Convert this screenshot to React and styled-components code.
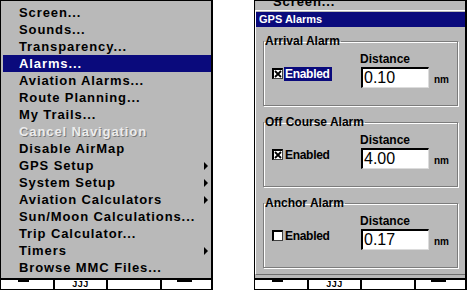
import styled, { createGlobalStyle } from "styled-components";

const GlobalStyle = createGlobalStyle`
  body {
    margin: 0;
    background: #fff;
  }
`;

const GRAY = "#b9b9b9";
const NAVY = "#0a0a7c";

const Screen = styled.div`
  display: flex;
  gap: 41px;
  width: 467px;
  height: 290px;
  font-family: "Liberation Sans", Arial, sans-serif;
`;

const Panel = styled.div`
  box-sizing: border-box;
  width: 213px;
  height: 290px;
  display: flex;
  flex-direction: column;
  background: ${GRAY};
  border-top: 1px solid #000;
  border-left: 1px solid #000;
  border-right: 2px solid #000;
`;

const Menu = styled.div`
  flex: 1;
  padding: 3px 0 2px;
`;

const Item = styled.div`
  display: flex;
  align-items: center;
  justify-content: space-between;
  height: 17px;
  margin-left: 2px;
  padding: 0 3px 0 16px;
  font-size: 13px;
  font-weight: bold;
  letter-spacing: 0.9px;
  line-height: 17px;
  white-space: nowrap;
  color: ${(p) => (p.$disabled ? "#ececec" : p.$selected ? "#fff" : "#000")};
  background: ${(p) => (p.$selected ? NAVY : "transparent")};
  text-shadow: ${(p) => (p.$disabled ? "1px 1px 0 #7a7a7a" : "none")};
`;

const Arrow = styled.span`
  width: 0;
  height: 0;
  border-left: 4px solid #000;
  border-top: 4px solid transparent;
  border-bottom: 4px solid transparent;
`;

const SoftBar = styled.div`
  box-sizing: border-box;
  display: flex;
  height: 12px;
  background: #fff;
  border-top: 2px solid #000;
  border-bottom: 1px solid #000;
`;

const SoftKey = styled.div`
  display: flex;
  justify-content: center;
  align-items: flex-start;
  overflow: hidden;
  width: ${(p) => (p.$w ? `${p.$w}px` : "auto")};
  flex: ${(p) => (p.$w ? "none" : "1")};
  border-right: ${(p) => (p.$last ? "none" : "2px solid #000")};
  font-size: 9px;
  font-weight: bold;
  line-height: 8px;
  letter-spacing: 0.5px;
`;

const Stub = styled.span`
  width: ${(p) => p.$w}px;
  height: 2px;
  margin-left: ${(p) => p.$shift || 0}px;
  background: #000;
`;

const Peek = styled.div`
  height: 9px;
  overflow: hidden;
  & > ${Item} {
    margin-top: -8px;
  }
`;

const Dialog = styled.div`
  flex: 1;
  display: flex;
  flex-direction: column;
  margin-bottom: 3px;
  border-top: 1px solid #fff;
  border-left: 1px solid #fff;
  border-bottom: 1px solid #6e6e6e;
`;

const TitleBar = styled.div`
  height: 15px;
  margin-top: 1px;
  padding-left: 3px;
  background: ${NAVY};
  color: #fff;
  font-size: 11px;
  font-weight: bold;
  line-height: 15px;
`;

const Body = styled.div`
  display: flex;
  flex-direction: column;
  gap: 9px;
  padding: 7px 7px 0;
`;

const Group = styled.fieldset`
  margin: 0;
  padding: 0;
  min-width: 0;
  border: 1px solid #7c7c7c;
  box-shadow: inset 1px 1px 0 #fff, 1px 1px 0 #fff;
`;

const Legend = styled.legend`
  margin-left: 0;
  padding: 0 1px;
  font-size: 12px;
  font-weight: bold;
  line-height: 14px;
  color: #000;
`;

const GroupBody = styled.div`
  display: grid;
  grid-template-columns: 88px auto;
  grid-template-rows: 15px 21px;
  padding: 4px 0 17px 8px;
`;

const Field = styled.div`
  grid-column: 1;
  grid-row: 2;
  display: flex;
  align-items: flex-start;
  padding-top: 1px;
`;

const Box = styled.span`
  box-sizing: border-box;
  display: flex;
  width: 11px;
  height: 11px;
  background: #fff;
  border-top: 2px solid #000;
  border-left: 2px solid #000;
  border-right: 1px solid #404040;
  border-bottom: 1px solid #404040;
`;

const CheckText = styled.span`
  margin-left: 1px;
  padding: 0 2px 0 1px;
  height: 14px;
  margin-top: -1px;
  font-size: 12px;
  font-weight: bold;
  letter-spacing: -0.3px;
  line-height: 14px;
  color: ${(p) => (p.$focus ? "#fff" : "#000")};
  background: ${(p) => (p.$focus ? NAVY : "transparent")};
`;

const Label = styled.div`
  grid-column: 2;
  grid-row: 1;
  font-size: 12px;
  font-weight: bold;
  line-height: 14px;
`;

const InputRow = styled.div`
  grid-column: 2;
  grid-row: 2;
  display: flex;
  align-items: flex-end;
`;

const Input = styled.div`
  box-sizing: border-box;
  width: 68px;
  height: 21px;
  margin-left: 1px;
  padding-left: 1px;
  background: #fff;
  border-top: 2px solid #000;
  border-left: 2px solid #000;
  border-right: 1px solid #dcdcdc;
  border-bottom: 1px solid #dcdcdc;
  font-size: 16px;
  line-height: 18px;
  color: #000;
`;

const Unit = styled.span`
  margin-left: 5px;
  padding-bottom: 3px;
  font-size: 10px;
  font-weight: bold;
  line-height: 10px;
`;

const menu = [
  { label: "Screen..." },
  { label: "Sounds..." },
  { label: "Transparency..." },
  { label: "Alarms...", selected: true },
  { label: "Aviation Alarms..." },
  { label: "Route Planning..." },
  { label: "My Trails..." },
  { label: "Cancel Navigation", disabled: true },
  { label: "Disable AirMap" },
  { label: "GPS Setup", arrow: true },
  { label: "System Setup", arrow: true },
  { label: "Aviation Calculators", arrow: true },
  { label: "Sun/Moon Calculations..." },
  { label: "Trip Calculator..." },
  { label: "Timers", arrow: true },
  { label: "Browse MMC Files..." },
];

const alarms = [
  { name: "Arrival Alarm", value: "0.10", checked: true, focus: true },
  { name: "Off Course Alarm", value: "4.00", checked: true },
  { name: "Anchor Alarm", value: "0.17", checked: false },
];

const Check = ({ checked }) => (
  <Box>
    {checked && (
      <svg width="8" height="8" viewBox="0 0 8 8">
        <path d="M1 1 L7 7 M7 1 L1 7" stroke="#000" strokeWidth="1.8" />
      </svg>
    )}
  </Box>
);

const Keys = () => (
  <SoftBar>
    <SoftKey $w={52}>
      <Stub $w={11} $shift={-8} />
    </SoftKey>
    <SoftKey $w={51}>JJJ</SoftKey>
    <SoftKey $w={52} />
    <SoftKey $last>
      <Stub $w={15} $shift={-4} />
    </SoftKey>
  </SoftBar>
);

export default function App() {
  return (
    <>
      <GlobalStyle />
      <Screen>
        <Panel>
          <Menu>
            {menu.map((m) => (
              <Item key={m.label} $selected={m.selected} $disabled={m.disabled}>
                {m.label}
                {m.arrow && <Arrow />}
              </Item>
            ))}
          </Menu>
          <Keys />
        </Panel>

        <Panel>
          <Peek>
            <Item>Screen...</Item>
          </Peek>
          <Dialog>
            <TitleBar>GPS Alarms</TitleBar>
            <Body>
              {alarms.map((a) => (
                <Group key={a.name}>
                  <Legend>{a.name}</Legend>
                  <GroupBody>
                    <Label>Distance</Label>
                    <Field>
                      <Check checked={a.checked} />
                      <CheckText $focus={a.focus}>Enabled</CheckText>
                    </Field>
                    <InputRow>
                      <Input>{a.value}</Input>
                      <Unit>nm</Unit>
                    </InputRow>
                  </GroupBody>
                </Group>
              ))}
            </Body>
          </Dialog>
          <Keys />
        </Panel>
      </Screen>
    </>
  );
}
